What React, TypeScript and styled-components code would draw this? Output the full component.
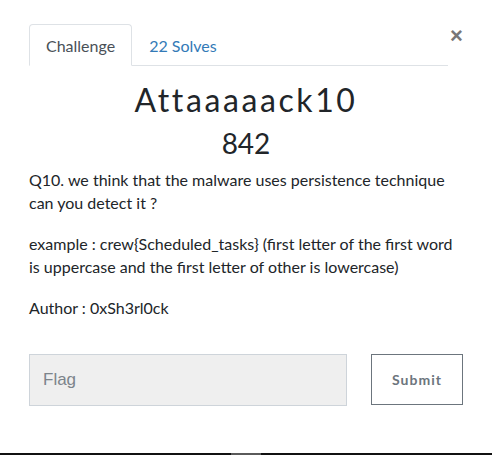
import React from "react";
import styled, { createGlobalStyle } from "styled-components";

const Global = createGlobalStyle`
  html, body { margin: 0; padding: 0; background: #fff; }
  body { font-family: Lato, "Open Sans", sans-serif; color: #212529; }
  * { box-sizing: border-box; }
`;

const Page = styled.div`
  height: 455px;
  display: flex;
  flex-direction: column;
  overflow: hidden;
`;

const Modal = styled.div`
  flex: 1;
  padding: 24px 29px 0 29px;
`;

const Header = styled.div`
  display: flex;
  align-items: flex-start;
`;

const Tabs = styled.ul`
  flex: 1;
  display: flex;
  margin: 0;
  padding: 0;
  list-style: none;
  border-bottom: 1px solid #dee2e6;
`;

const Tab = styled.li<{ $active?: boolean }>`
  height: 42px;
  margin-bottom: -1px;
  padding: 0 16px;
  display: flex;
  align-items: center;
  font-size: 16px;
  border: 1px solid ${(p) => (p.$active ? "#dee2e6" : "transparent")};
  border-bottom-color: ${(p) => (p.$active ? "#fff" : "transparent")};
  border-radius: 4px 4px 0 0;
  background: ${(p) => (p.$active ? "#fff" : "transparent")};
  color: ${(p) => (p.$active ? "#495057" : "#337ab7")};
`;

const Close = styled.button`
  border: 0;
  background: none;
  padding: 0;
  margin: 1px 0 0 2px;
  width: 13px;
  font-family: "Liberation Sans", Arial, sans-serif;
  font-weight: 700;
  font-size: 22px;
  line-height: 22px;
  color: #777;
`;

const Title = styled.h2`
  margin: 15px 0 0;
  text-align: center;
  font-weight: 400;
  font-size: 32px;
  line-height: 38px;
  letter-spacing: 2.6px;
  color: #212529;
`;

const Points = styled.h3`
  margin: 6px 0 7px;
  text-align: center;
  font-weight: 400;
  font-size: 28px;
  line-height: 36px;
  color: #212529;
`;

const Para = styled.p`
  margin: 0 0 18px;
  font-size: 16px;
  line-height: 23px;
  color: #212529;
`;

const FormRow = styled.div`
  display: flex;
  gap: 24px;
  margin-top: 35px;
`;

const FlagInput = styled.input`
  width: 318px;
  height: 52px;
  padding: 0 13px;
  border: 1px solid #ced4da;
  background: #efefef;
  font-family: "Liberation Sans", Arial, sans-serif;
  font-size: 17px;
  color: #495057;
  outline: none;
  &::placeholder { color: #7c848b; }
`;

const Submit = styled.button`
  width: 92px;
  height: 51px;
  border: 1px solid #6c757d;
  background: #fff;
  font-family: Lato, sans-serif;
  font-weight: 700;
  font-size: 14px;
  letter-spacing: 1px;
  color: #6c757d;
`;

const BottomBar = styled.div`
  height: 2px;
  background: #111;
  display: flex;
  padding-left: 231px;
`;

const BarHandle = styled.div`
  width: 30px;
  height: 2px;
  background: #5a5a5a;
`;

export default function App() {
  return (
    <Page>
      <Global />
      <Modal>
        <Header>
          <Tabs>
            <Tab $active>Challenge</Tab>
            <Tab>22 Solves</Tab>
          </Tabs>
          <Close aria-label="Close">×</Close>
        </Header>
        <Title>Attaaaaack10</Title>
        <Points>842</Points>
        <Para>
          Q10. we think that the malware uses persistence technique can you detect it ?
        </Para>
        <Para>
          example : crew{"{"}Scheduled_tasks{"}"} (first letter of the first word is uppercase and the
          first letter of other is lowercase)
        </Para>
        <Para>Author : 0xSh3rl0ck</Para>
        <FormRow>
          <FlagInput placeholder="Flag" />
          <Submit>Submit</Submit>
        </FormRow>
      </Modal>
      <BottomBar>
        <BarHandle />
      </BottomBar>
    </Page>
  );
}
